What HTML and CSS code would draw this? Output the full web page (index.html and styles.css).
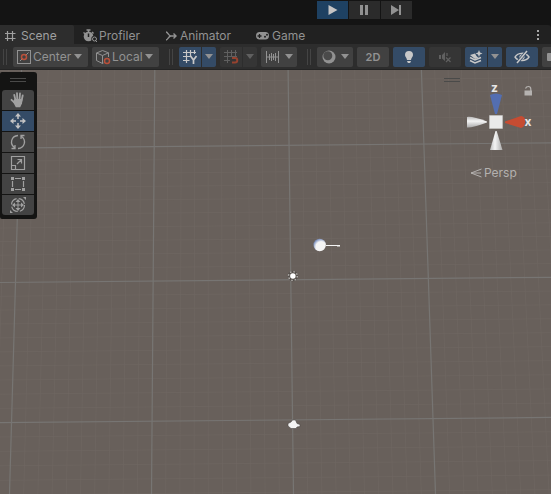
FILE: index.html
```html
<!DOCTYPE html>
<html lang="en">
<head>
<meta charset="utf-8">
<title>Scene</title>
<link rel="stylesheet" href="styles.css">
</head>
<body>
<header class="playbar">
  <button class="play active" aria-label="Play"><svg width="16" height="16" viewBox="0 0 16 16"><path fill="currentColor" d="M3.500 3l9 5-9 5z"/></svg></button>
  <button class="play" aria-label="Pause"><svg width="16" height="16" viewBox="0 0 16 16"><path fill="currentColor" d="M3 3h3v10H3zM8 3h3v10H8z"/></svg></button>
  <button class="play" aria-label="Step"><svg width="16" height="16" viewBox="0 0 16 16"><path fill="currentColor" d="M2 3l8 5-8 5zM10 3h2v10h-2z"/></svg></button>
</header>

<nav class="tabs">
  <button class="tab tab-scene selected"><svg width="12" height="12" viewBox="0 0 12 12"><path d="M3.500 1v10M8.500 1v10M1 3.500h10.500M1 8.500h10.500" stroke="currentColor" stroke-width="1.200" fill="none"/></svg>Scene</button>
  <button class="tab tab-profiler"><svg width="16" height="14" viewBox="0 0 16 14"><circle cx="6.500" cy="7.500" r="4.800" fill="currentColor"/><path d="M4.500 1h4M6.500 1v2M1.500 3.500l2 1.500M10 3l1.500 1.500" stroke="currentColor" stroke-width="1.500"/><path d="M6.500 4.500V8" stroke="#212121" stroke-width="1.500"/><circle cx="12.500" cy="10" r="3.200" fill="#212121"/><circle cx="12.500" cy="10" r="2" fill="none" stroke="currentColor"/><path d="M13 11l2 2" stroke="currentColor"/></svg>Profiler</button>
  <button class="tab tab-animator"><svg width="12" height="12" viewBox="0 0 12 12"><path d="M1 2c2 0 2.500 4 5 4h5M1 10c2 0 2.500-4 5-4M8.500 3.500L11 6 8.500 8.500" stroke="currentColor" stroke-width="1.400" fill="none"/></svg>Animator</button>
  <button class="tab tab-game"><svg width="15" height="12" viewBox="0 0 15 12"><rect x="1" y="2" width="13" height="7.500" rx="3.700" fill="currentColor"/><path d="M2.500 6h4M4.500 4v4" stroke="#212121" stroke-width="1.300"/><circle cx="10" cy="6.800" r="1" fill="#212121"/><circle cx="12" cy="4.800" r="1" fill="#212121"/></svg>Game</button>
  <button class="more" aria-label="More"><svg width="4" height="12" viewBox="0 0 4 12"><path fill="currentColor" d="M1 1h2v2H1zM1 5h2v2H1zM1 9h2v2H1z"/></svg></button>
</nav>

<div class="toolbar">
  <span class="grip"></span>
  <div class="group">
    <label class="tool pick pick-center">
      <svg width="16" height="16" viewBox="0 0 16 16" fill="none"><rect x="1.500" y="1.500" width="13" height="13" stroke="#929292"/><path d="M4 12l3-3M9 7l3.500-3.500" stroke="#929292"/><circle cx="8" cy="8" r="2.500" stroke="#b8503a" stroke-width="1.500"/></svg>
      <select aria-label="Handle position"><option>Center</option></select><span class="arrow"></span>
    </label>
    <label class="tool pick pick-local">
      <svg width="16" height="16" viewBox="0 0 16 16" fill="none"><path d="M13.500 8V3.800L7.500 1.500 1.500 4v7.500l6 3 1-.5M1.500 4l6 2.500 6-2.700M7.500 6.500v8" stroke="#929292"/><circle cx="12" cy="12" r="2.500" stroke="#b8503a" stroke-width="1.500"/></svg>
      <select aria-label="Handle rotation"><option>Local</option></select><span class="arrow"></span>
    </label>
  </div>
  <span class="grip"></span>
  <div class="group">
    <div class="split on">
      <button class="tool main" aria-label="Grid axis Y"><svg width="16" height="16" viewBox="0 0 16 16" fill="none" stroke="currentColor"><path stroke-width="1.200" d="M4.500 1v13M8.500 1v7M12.500 1v4M1 3.500h13M1 7.500h8M1 11.500h6.500"/><path stroke-width="1.700" d="M8.500 7l3 4 3-4M11.500 10.500V15"/></svg></button>
      <button class="tool drop" aria-label="Grid options"><span class="arrow"></span></button>
    </div>
    <div class="split off">
      <button class="tool main" aria-label="Snap"><svg width="16" height="16" viewBox="0 0 16 16" fill="none" stroke="currentColor"><path d="M4.500 1v13M8.500 1v6M12.500 1v6M1 3.500h13M1 7.500h13M1 11.500h6"/><path stroke="#96422f" stroke-width="2" d="M9 9h3a2.200 2.200 0 010 4.500H9"/></svg></button>
      <button class="tool drop" aria-label="Snap options"><span class="arrow"></span></button>
    </div>
    <button class="tool combo" aria-label="Increment snapping"><svg width="16" height="16" viewBox="0 0 16 16" fill="none" stroke="currentColor"><path d="M1.500 2v12M13.500 2v12M4.500 5v6M6.500 4v8M8.500 5v6M10.500 4v8M2 8h12"/></svg><span class="arrow"></span></button>
  </div>
  <span class="grip"></span>
  <div class="group">
    <button class="tool combo" aria-label="Draw mode"><svg width="16" height="16" viewBox="0 0 16 16"><circle cx="8" cy="8" r="6.500" fill="#929292"/><circle cx="6.800" cy="6.800" r="4.500" fill="#4a4a4a"/></svg><span class="arrow"></span></button>
    <button class="tool wide">2D</button>
    <button class="tool wide lit" aria-label="Lighting"><svg width="16" height="16" viewBox="0 0 16 16" fill="currentColor"><path d="M8 2a4 4 0 014 4c0 2-1.700 2.600-2 5H6C5.700 8.600 4 8 4 6a4 4 0 014-4z"/><path d="M6.200 12h3.600v1L8.800 14H7.200l-1-1z"/></svg></button>
    <button class="tool wide dim" aria-label="Audio"><svg width="14" height="14" viewBox="0 0 14 14" fill="none" stroke="currentColor"><path fill="currentColor" stroke="none" d="M1 5h2v4H1zM4 5l3-3v9L4 8.500z"/><path stroke-width="1.200" d="M8 7.500l4.500 4.500M12.500 7.500L8 12M9 3v3"/></svg></button>
    <div class="split on">
      <button class="tool main" aria-label="Effects"><svg width="16" height="16" viewBox="0 0 16 16" fill="currentColor"><path d="M11 1l1 2.500 2.500 1L12 5.500 11 8 10 5.500l-2.500-1 2.500-1z"/><path d="M2 6l5-1.500L8.500 7l2 2-3.500 1z"/><path fill="none" stroke="currentColor" stroke-width="1.500" d="M2 8.500l5 2.500 6-2.500M2 11.500L7 14l6-2.500"/></svg></button>
      <button class="tool drop" aria-label="Effects options"><span class="arrow"></span></button>
    </div>
    <button class="tool wide lit" aria-label="Scene visibility"><svg width="16" height="16" viewBox="0 0 16 16" fill="none" stroke="currentColor"><path stroke-width="1.400" d="M1 8c3-4.800 10.500-5 14 0-3 4.500-10.500 5-14 0z"/><circle cx="8" cy="8" r="2.200" fill="currentColor"/><path stroke="#344b66" stroke-width="3" d="M3 14L13 2"/><path stroke-width="1.500" d="M3 14L13 2"/></svg></button>
    <button class="tool wide" aria-label="Camera"><svg width="22" height="12" viewBox="0 0 22 12"><rect y="2" width="14" height="8" rx="1" fill="currentColor"/><path fill="currentColor" d="M15 5l6-3v8l-6-3z"/></svg></button>
  </div>
</div>

<main class="scene">
  <svg class="world" viewBox="0 70 551 424" preserveAspectRatio="xMinYMin slice" aria-label="Scene view">
    <defs><radialGradient id="ball" cx=".62" cy=".65" r=".65"><stop offset=".65" stop-color="#f4f4f4"/><stop offset="1" stop-color="#7d91bf"/></radialGradient></defs>
    <g id="grid"></g>
    <circle cx="319.700" cy="245" r="6.200" fill="url(#ball)"/>
    <path d="M326 245.500h14M337 246h3" stroke="#f4f4f4" stroke-width="1.200"/>
    <circle cx="292.900" cy="276" r="4" fill="none" stroke="#55504c" stroke-width="2.400"/>
    <circle cx="292.900" cy="276" r="4.400" fill="none" stroke="#b4b1ae" stroke-width="1.400" stroke-dasharray="1.500 1.950"/>
    <circle cx="292.900" cy="276" r="2.700" fill="#fff"/>
    <path d="M288 423.500l3-1.500 1.500-2 3 0 1.500 3.500 3 1v2l-3 .5-1 1.500h-5l-3-2.500z" fill="#f4f4f4" stroke="#4b4744" stroke-width=".6"/>
  </svg>

  <div class="tools" role="toolbar">
    <span class="handle"></span>
    <button aria-label="Hand"><svg width="18" height="18" viewBox="0 0 18 18"><g stroke="currentColor" stroke-width="1.800" stroke-linecap="round"><path d="M5.200 3.800L6.700 10M8 2.200L8.300 9M11 2.500L10.500 9M13.700 4.500L12.500 10M2.500 8.800L6 12"/></g><path fill="currentColor" d="M5.500 8h8l-.5 4.500-1.800 3.700H6.800L4 11z"/></svg></button>
    <button class="current" aria-label="Move"><svg width="18" height="18" viewBox="0 0 18 18"><path stroke="currentColor" stroke-width="1.500" d="M9 3v4M9 11v4M3 9h4M11 9h4"/><path fill="currentColor" d="M9 1l3 3.500H6zM9 17l-3-3.500h6zM1 9l3.500-3v6zM17 9l-3.500 3V6z"/></svg></button>
    <button aria-label="Rotate"><svg width="18" height="18" viewBox="0 0 18 18" fill="none" stroke="currentColor" stroke-width="1.300"><path d="M9 2.500C2 3 .5 11 5.500 14.500M2.500 15.500h3.500V12M9 15.500C16 15 17.500 7 12.500 3.500M15.500 2.500H12V6"/></svg></button>
    <button aria-label="Scale"><svg width="18" height="18" viewBox="0 0 18 18" fill="none" stroke="currentColor" stroke-width="1.200"><path d="M2.500 2.500h13v13h-13zM2.500 11.500h4v4M8 10l4.500-4.500M8.500 5.500h4v4"/></svg></button>
    <button aria-label="Rect"><svg width="18" height="18" viewBox="0 0 18 18"><path stroke="currentColor" stroke-width="1.200" d="M6 3.500h6M6 14.500h6M3.500 6v6M14.500 6v6"/><path fill="currentColor" d="M2 2h3v3H2zM13 2h3v3h-3zM2 13h3v3H2zM13 13h3v3h-3z"/></svg></button>
    <button aria-label="Transform"><svg width="18" height="18" viewBox="0 0 18 18" fill="none" stroke="currentColor"><circle cx="9" cy="9" r="6.500" stroke-width="1.200" stroke-dasharray="8 2.200"/><path d="M9 4v10M4 9h10"/><path fill="currentColor" stroke="none" d="M9 3l2.500 3h-5zM9 15l-2.500-3h5zM3 9l3-2.500v5zM15 9l-3 2.500v-5zM14 1h3v3zM1 14v3h3z"/></svg></button>
  </div>

  <div class="orient">
    <span class="handle"></span>
    <svg class="gizmo" width="80" height="78" viewBox="460 78 80 78" role="img" aria-label="Orientation">
      <defs><linearGradient id="cone"><stop stop-color="#bcbcbc"/><stop offset=".4" stop-color="#f4f4f4"/><stop offset="1" stop-color="#aaa"/></linearGradient>
      <linearGradient id="side" x2="0" y2="1"><stop stop-color="#bcbcbc"/><stop offset=".4" stop-color="#f4f4f4"/><stop offset="1" stop-color="#aaa"/></linearGradient></defs>
      <path fill="#536eb1" d="M490 95q6-3 12 0l-5 19h-2z"/>
      <path fill="url(#side)" d="M467 117q5-1 20 4.500v1q-15 5.500-20 5z"/>
      <path fill="#c64c32" d="M505 121.500l16-5.500q5 1 4 6 0 5-4 6l-16-5z"/>
      <path fill="url(#cone)" d="M495.500 131h1.200l5.800 19h-12.500z"/>
      <path fill="#eaeaea" stroke="#cfcfcf" stroke-width=".5" d="M489.500 115.500h13v13h-13z"/>
      <text class="axis" x="494.500" y="91.500" text-anchor="middle">z</text>
      <text class="axis" x="528" y="125.500" text-anchor="middle">x</text>
      <path fill="none" stroke="#b5b2b0" stroke-width="1.200" d="M525.500 88.500q.8-2 2.800-2 2.500 0 2.500 2.500V91"/>
      <path fill="#b5b2b0" d="M524.500 90.500h7.500v5h-7.500z"/>
    </svg>
    <button class="persp"><svg width="12" height="10" viewBox="0 0 12 10"><path d="M11.500 1L1 5l10.500 4M1 5h10" stroke="currentColor" fill="none"/></svg>Persp</button>
  </div>
</main>
<script src="grid.js"></script>
</body>
</html>
```
FILE: styles.css
```css
* { box-sizing: border-box; }
body {
  margin: 0;
  min-height: 100vh;
  display: flex;
  flex-direction: column;
  overflow: hidden;
  background: #141414;
  color: #929292;
  font: 12px/18px Inter, "Liberation Sans", sans-serif;
}
button, select {
  margin: 0;
  padding: 0;
  border: 0;
  background: none;
  color: inherit;
  font: inherit;
}
svg { display: block; flex: none; }

.playbar {
  display: flex;
  gap: 1px;
  height: 25px;
  padding: 1px 0 6px 317px;
}
.play {
  display: grid;
  place-items: center;
  width: 31px;
  background: #2b2b2b;
}
.play.active { background: #1e4162; color: #c4c4c4; }

.tabs {
  display: flex;
  height: 19px;
  background: #212121;
  border-radius: 0 3px 0 0;
}
.tab {
  display: flex;
  align-items: center;
  padding: 2px 8px 0 6px;
}
.tab-scene { gap: 5px; padding-left: 4px; width: 74px; }
.tab-profiler { gap: 1px; width: 85px; padding-left: 8px; }
.tab-animator { gap: 3px; width: 90px; }
.tab-game { gap: 2px; }
.selected { background: #2d2d2d; color: #a0a0a0; border-radius: 0 2px 0 0; }
.more { margin-left: auto; padding: 0 11px; color: #a8a8a8; }

.toolbar {
  display: flex;
  align-items: center;
  gap: 6px;
  height: 26px;
  padding: 0 3px;
  background: #2d2d2d;
  border-bottom: 1px solid #242424;
  overflow: hidden;
}
.grip {
  flex: none;
  width: 4px;
  height: 16px;
  border: solid #444;
  border-width: 0 1px;
}
.group { display: flex; flex: none; gap: 4px; margin-right: 4px; }
.tool {
  display: flex;
  align-items: center;
  justify-content: center;
  flex: none;
  height: 20px;
  background: #414141;
  border-radius: 2px;
}
.pick { justify-content: flex-start; gap: 1px; padding: 0 6px 0 3px; }
.pick-center { width: 75px; }
.pick-local { width: 67px; }
.pick select { appearance: none; }
.pick .arrow { margin-left: auto; }
.arrow {
  flex: none;
  border: 4px solid transparent;
  border-top: 5px solid currentColor;
  border-bottom: 0;
}
.combo { width: 36px; gap: 4px; }
.wide { width: 32px; font-size: 11px; font-weight: 600; }
.lit, .on .tool { background: #344b66; color: #c8c8c8; }
.dim, .off .tool { background: #353535; color: #606060; }
.split { display: flex; gap: 1px; }
.split .main { width: 22px; border-radius: 2px 0 0 2px; }
.split .drop { width: 14px; border-radius: 0 2px 2px 0; color: #929292; }
.off .drop { color: #606060; }

.scene {
  position: relative;
  flex: 1;
  min-height: 424px;
  background: #68605b;
  overflow: hidden;
}
.world { position: absolute; inset: 0; width: 100%; height: 100%; }
.major { stroke: #777573; stroke-width: 1.2px; }
.minor { stroke: #706863; stroke-width: 1px; opacity: .6; }

.tools {
  position: absolute;
  left: 0;
  top: 2px;
  display: flex;
  flex-direction: column;
  gap: 1px;
  width: 37px;
  padding: 6px 3px 4px 2px;
  background: #141413;
  border-radius: 2px 3px 3px 2px;
}
.handle {
  align-self: center;
  width: 16px;
  height: 4px;
  border: solid #4a4a49;
  border-width: 1px 0;
}
.tools .handle { margin-bottom: 7px; }
.tools button {
  display: grid;
  place-items: center;
  height: 20px;
  background: #434343;
  color: #a0a0a0;
}
.tools .handle + button { border-radius: 3px 3px 0 0; }
.tools button:last-child { border-radius: 0 0 3px 3px; }
.tools .current { background: #344b66; color: #c4c4c4; }

.orient {
  position: absolute;
  top: 8px;
  right: 11px;
  display: grid;
  width: 96px;
}
.orient .handle { grid-area: 1 / 1; align-self: start; }
.gizmo { grid-area: 1 / 1; justify-self: end; }
.axis { fill: #e6e6e6; font: 700 12px Inter, sans-serif; }
.persp {
  display: flex;
  align-items: center;
  gap: 2px;
  margin: 8px 0 0 26px;
  color: #b4b1af;
}
```
FILE: grid.js
```js
// Draws the ground plane: ten minor cells between two major lines.
const grid = document.getElementById("grid");

function line(x1, y1, x2, y2, major) {
  const el = document.createElementNS("http://www.w3.org/2000/svg", "line");
  el.setAttribute("x1", x1);
  el.setAttribute("y1", y1);
  el.setAttribute("x2", x2);
  el.setAttribute("y2", y2);
  el.setAttribute("class", major ? "major" : "minor");
  grid.appendChild(el);
}

function draw(major) {
  for (let i = -2; i <= 42; i++) {
    if ((i % 10 === 0) === major) line(21.5 + 13.33 * i, 70, 9.5 + 14.2 * i, 494, major);
  }
  for (let j = -16; j <= 16; j++) {
    const y = 282.5 + 13.73 * j + 0.0285 * j * j;
    if ((j % 10 === 0) === major) line(0, y, 551, y - 5.2, major);
  }
}

draw(false);
draw(true);
```
